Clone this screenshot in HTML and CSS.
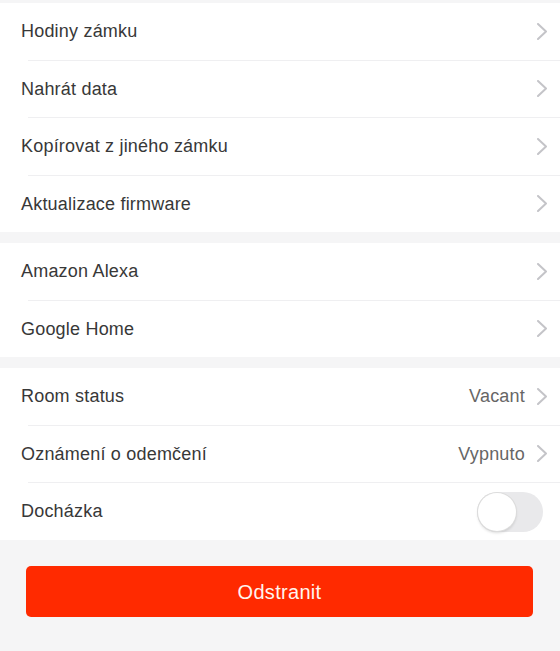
FILE: index.html
```html
<!DOCTYPE html>
<html lang="cs">
<head>
<meta charset="utf-8">
<title>Nastavení zámku</title>
<link rel="stylesheet" href="styles.css">
</head>
<body>
<div class="page">
  <div class="group first">
    <div class="row"><span class="label">Hodiny zámku</span><span class="right"><svg class="chev" viewBox="0 0 10 17"><polyline points="1,1 9,8.5 1,16"/></svg></span></div>
    <div class="sep"></div>
    <div class="row"><span class="label">Nahrát data</span><span class="right"><svg class="chev" viewBox="0 0 10 17"><polyline points="1,1 9,8.5 1,16"/></svg></span></div>
    <div class="sep"></div>
    <div class="row"><span class="label">Kopírovat z jiného zámku</span><span class="right"><svg class="chev" viewBox="0 0 10 17"><polyline points="1,1 9,8.5 1,16"/></svg></span></div>
    <div class="sep"></div>
    <div class="row"><span class="label">Aktualizace firmware</span><span class="right"><svg class="chev" viewBox="0 0 10 17"><polyline points="1,1 9,8.5 1,16"/></svg></span></div>
  </div>
  <div class="group">
    <div class="row"><span class="label">Amazon Alexa</span><span class="right"><svg class="chev" viewBox="0 0 10 17"><polyline points="1,1 9,8.5 1,16"/></svg></span></div>
    <div class="sep"></div>
    <div class="row"><span class="label">Google Home</span><span class="right"><svg class="chev" viewBox="0 0 10 17"><polyline points="1,1 9,8.5 1,16"/></svg></span></div>
  </div>
  <div class="group">
    <div class="row"><span class="label">Room status</span><span class="right"><span class="value">Vacant</span><svg class="chev" viewBox="0 0 10 17"><polyline points="1,1 9,8.5 1,16"/></svg></span></div>
    <div class="sep"></div>
    <div class="row"><span class="label">Oznámení o odemčení</span><span class="right"><span class="value">Vypnuto</span><svg class="chev" viewBox="0 0 10 17"><polyline points="1,1 9,8.5 1,16"/></svg></span></div>
    <div class="sep"></div>
    <div class="row toggle-row"><span class="label">Docházka</span><span class="toggle"><span class="knob"></span></span></div>
  </div>
  <div class="actions">
    <button class="danger" type="button">Odstranit</button>
  </div>
</div>
</body>
</html>
```
FILE: styles.css
```css
html, body {
  margin: 0;
  padding: 0;
  background: #f5f5f6;
}
body {
  font-family: "Liberation Sans", Arial, sans-serif;
  color: #333333;
}
.page {
  padding-top: 3px;
  display: flex;
  flex-direction: column;
  gap: 11px;
}
.group {
  background: #ffffff;
  display: flex;
  flex-direction: column;
}
.row {
  height: 56.5px;
  display: flex;
  align-items: center;
  justify-content: space-between;
  padding: 1px 13px 0 21px;
  box-sizing: border-box;
}
.label {
  font-size: 18px;
  color: #383838;
  letter-spacing: 0.2px;
}
.right {
  display: flex;
  align-items: center;
  gap: 12px;
}
.value {
  font-size: 18px;
  color: #666666;
  letter-spacing: 0.2px;
}
.chev {
  width: 10px;
  height: 17px;
  display: block;
  margin-top: -1px;
}
.chev polyline {
  fill: none;
  stroke: #c4c4c8;
  stroke-width: 2;
  stroke-linecap: round;
  stroke-linejoin: round;
}
.sep {
  height: 1px;
  margin-left: 28px;
  background: #efeff1;
}
.toggle-row {
  padding-right: 17px;
}
.toggle {
  width: 66px;
  height: 40px;
  border-radius: 20px;
  background: #e9e9eb;
  display: flex;
  align-items: center;
  padding: 1px;
  box-sizing: border-box;
}
.knob {
  width: 38px;
  height: 38px;
  border-radius: 50%;
  background: #ffffff;
  box-shadow: 0 0 0 1px #dcdcdc, 0 2px 3px rgba(0,0,0,0.15);
}
.actions {
  padding: 15px 27px 0 26px;
}
.danger {
  width: 100%;
  height: 51px;
  border: none;
  border-radius: 5px;
  background: #ff2a00;
  color: #fff4ee;
  font-family: "Liberation Sans", Arial, sans-serif;
  font-size: 20px;
  letter-spacing: 0.3px;
  padding-top: 3px;
  display: block;
}
```
